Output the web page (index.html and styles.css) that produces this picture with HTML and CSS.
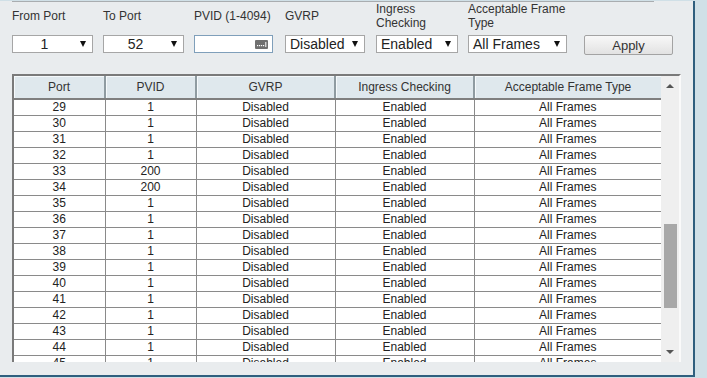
FILE: index.html
```html
<!DOCTYPE html>
<html lang="en">
<head>
    <meta charset="UTF-8">
    <meta name="viewport" content="width=device-width, initial-scale=1.0">
    <title>Port VLAN Settings</title>
    <link rel="stylesheet" href="styles.css">
</head>
<body>
    <div class="panel">
        <div class="rule"></div>
        <div class="filters">
            <div class="field f-from">
                <label>From Port</label>
                <div class="select centered"><span>1</span><svg class="caret" viewBox="0 0 6 6"><path d="M0 0h6L3 6z"/></svg></div>
            </div>
            <div class="field f-to">
                <label>To Port</label>
                <div class="select centered"><span>52</span><svg class="caret" viewBox="0 0 6 6"><path d="M0 0h6L3 6z"/></svg></div>
            </div>
            <div class="field f-pvid">
                <label>PVID (1-4094)</label>
                <div class="input">
                    <svg class="key" viewBox="0 0 13 9"><rect width="13" height="9" rx="1" fill="#707070"/><rect x="2" y="5" width="1.2" height="1.2" fill="#fff"/><rect x="4" y="5" width="1.2" height="1.2" fill="#fff"/><rect x="6" y="5" width="1.2" height="1.2" fill="#fff"/><rect x="8" y="5" width="1.2" height="1.2" fill="#fff"/><rect x="10.3" y="2" width="1" height="5" fill="#fff"/></svg>
                </div>
            </div>
            <div class="field f-gvrp">
                <label>GVRP</label>
                <div class="select"><span>Disabled</span><svg class="caret" viewBox="0 0 6 6"><path d="M0 0h6L3 6z"/></svg></div>
            </div>
            <div class="field f-ingress">
                <label>Ingress<br>Checking</label>
                <div class="select"><span>Enabled</span><svg class="caret" viewBox="0 0 6 6"><path d="M0 0h6L3 6z"/></svg></div>
            </div>
            <div class="field f-frame">
                <label>Acceptable Frame<br>Type</label>
                <div class="select"><span>All Frames</span><svg class="caret" viewBox="0 0 6 6"><path d="M0 0h6L3 6z"/></svg></div>
            </div>
            <div class="field f-apply">
                <label></label>
                <button class="apply">Apply</button>
            </div>
        </div>

        <div class="grid">
            <div class="view">
                <table>
                    <colgroup>
                        <col style="width: 91px">
                        <col style="width: 91px">
                        <col style="width: 139px">
                        <col style="width: 139px">
                        <col style="width: 188px">
                    </colgroup>
                    <thead>
                        <tr><th>Port</th><th>PVID</th><th>GVRP</th><th>Ingress Checking</th><th>Acceptable Frame Type</th></tr>
                    </thead>
                    <tbody>
                        <tr><td>29</td><td>1</td><td>Disabled</td><td>Enabled</td><td>All Frames</td></tr>
                        <tr><td>30</td><td>1</td><td>Disabled</td><td>Enabled</td><td>All Frames</td></tr>
                        <tr><td>31</td><td>1</td><td>Disabled</td><td>Enabled</td><td>All Frames</td></tr>
                        <tr><td>32</td><td>1</td><td>Disabled</td><td>Enabled</td><td>All Frames</td></tr>
                        <tr><td>33</td><td>200</td><td>Disabled</td><td>Enabled</td><td>All Frames</td></tr>
                        <tr><td>34</td><td>200</td><td>Disabled</td><td>Enabled</td><td>All Frames</td></tr>
                        <tr><td>35</td><td>1</td><td>Disabled</td><td>Enabled</td><td>All Frames</td></tr>
                        <tr><td>36</td><td>1</td><td>Disabled</td><td>Enabled</td><td>All Frames</td></tr>
                        <tr><td>37</td><td>1</td><td>Disabled</td><td>Enabled</td><td>All Frames</td></tr>
                        <tr><td>38</td><td>1</td><td>Disabled</td><td>Enabled</td><td>All Frames</td></tr>
                        <tr><td>39</td><td>1</td><td>Disabled</td><td>Enabled</td><td>All Frames</td></tr>
                        <tr><td>40</td><td>1</td><td>Disabled</td><td>Enabled</td><td>All Frames</td></tr>
                        <tr><td>41</td><td>1</td><td>Disabled</td><td>Enabled</td><td>All Frames</td></tr>
                        <tr><td>42</td><td>1</td><td>Disabled</td><td>Enabled</td><td>All Frames</td></tr>
                        <tr><td>43</td><td>1</td><td>Disabled</td><td>Enabled</td><td>All Frames</td></tr>
                        <tr><td>44</td><td>1</td><td>Disabled</td><td>Enabled</td><td>All Frames</td></tr>
                        <tr><td>45</td><td>1</td><td>Disabled</td><td>Enabled</td><td>All Frames</td></tr>
                    </tbody>
                </table>
            </div>
            <div class="scrollbar">
                <div class="sb-btn"><svg viewBox="0 0 8 4"><path d="M0 4L4 0l4 4z"/></svg></div>
                <div class="sb-track"><div class="sb-thumb"></div></div>
                <div class="sb-btn"><svg viewBox="0 0 8 4"><path d="M0 0h8L4 4z"/></svg></div>
            </div>
        </div>
    </div>
</body>
</html>
```

FILE: styles.css
```css
body {
    margin: 0;
    background: #d0e0e7;
    font-family: 'Liberation Sans', Arial, sans-serif;
    color: #333;
}
.panel {
    width: 681px;
    height: 374px;
    background: #e9ecee;
    border-right: 2px solid #2f5f7e;
    border-bottom: 2px solid #2f5f7e;
    padding-left: 12px;
}
.rule {
    width: 642px;
    margin-top: 1px;
    border-top: 1px solid #a9adb0;
}
.filters {
    display: flex;
    height: 53px;
}
.field {
    display: flex;
    flex-direction: column;
}
.field label {
    height: 28px;
    display: flex;
    align-items: center;
    font-size: 12px;
    line-height: 14px;
    color: #333;
    margin-bottom: 5px;
}
.f-from { width: 81px; margin-right: 10px; }
.f-to { width: 81px; margin-right: 10px; }
.f-pvid { width: 79px; margin-right: 12px; }
.f-gvrp { width: 80px; margin-right: 11px; }
.f-ingress { width: 82px; margin-right: 10px; }
.f-frame { width: 99px; margin-right: 17px; }
.f-apply { width: 89px; }
.select {
    height: 18px;
    box-sizing: border-box;
    background: #fff;
    border: 1px solid #a6a6a6;
    display: flex;
    align-items: center;
    padding: 0 6px 0 4px;
    font-size: 14px;
    color: #222;
}
.select span {
    flex: 1;
}
.select.centered span {
    text-align: center;
    padding-right: 8px;
}
.caret {
    width: 6px;
    height: 6px;
    fill: #111;
}
.input {
    height: 18px;
    box-sizing: border-box;
    background: #fff;
    border: 1px solid #7f9fba;
    display: flex;
    align-items: center;
    justify-content: flex-end;
    padding-right: 4px;
}
.key {
    width: 13px;
    height: 9px;
}
.apply {
    height: 20px;
    margin: 0;
    padding: 0;
    border: 1px solid #a3a3a3;
    border-radius: 2px;
    background: linear-gradient(#f8f8f8, #e2e2e2);
    font-family: 'Liberation Sans', Arial, sans-serif;
    font-size: 13px;
    color: #333;
}
.grid {
    display: flex;
    width: 669px;
    height: 288px;
    margin-top: 19px;
    border-top: 2px solid #7a7a7a;
    border-left: 2px solid #7a7a7a;
    border-right: 2px solid #fafafa;
    box-sizing: border-box;
    overflow: hidden;
}
.view {
    width: 648px;
    overflow: hidden;
    background: #fff;
}
table {
    width: 648px;
    table-layout: fixed;
    border-collapse: collapse;
    font-size: 12px;
}
th {
    height: 22px;
    padding: 0;
    font-weight: normal;
    color: #333;
    background: #dfe8ed;
    border-right: 2px solid #8f9ba1;
    border-bottom: 2px solid #7f7f7f;
    box-shadow: inset 1px 1px 0 #f5f9fb;
}
td {
    height: 15px;
    padding: 0;
    line-height: 15px;
    text-align: center;
    color: #222;
    border-right: 1px solid #8a8a8a;
    border-bottom: 1px solid #8a8a8a;
}
th:last-child, td:last-child {
    border-right: 2px solid #7a7a7a;
}
.scrollbar {
    width: 18px;
    display: flex;
    flex-direction: column;
    background: #efefef;
}
.sb-btn {
    height: 20px;
    display: flex;
    align-items: center;
    justify-content: center;
}
.sb-btn svg {
    width: 8px;
    height: 4px;
    fill: #555;
}
.sb-track {
    flex: 1;
}
.sb-thumb {
    width: 13px;
    height: 84px;
    margin: 128px 0 0 3px;
    background: #a8a8a8;
}
```
